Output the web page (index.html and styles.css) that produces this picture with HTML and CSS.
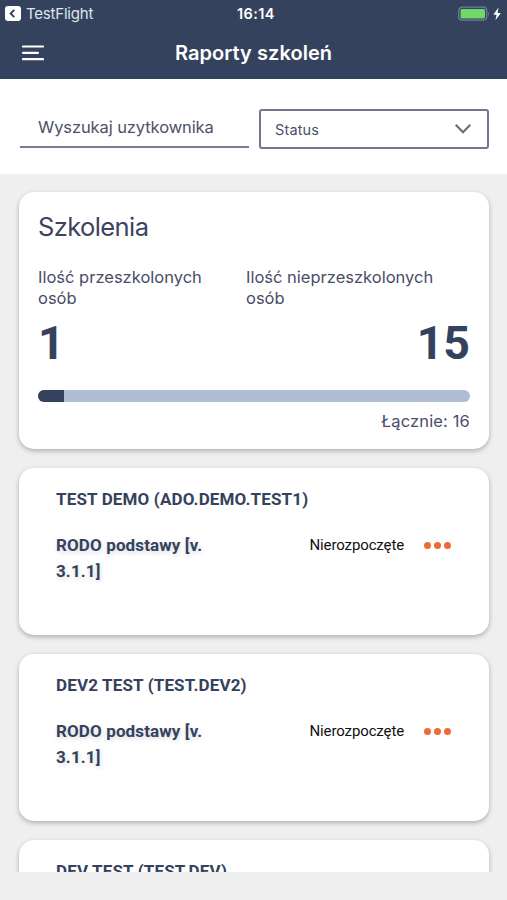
FILE: index.html
```html
<!DOCTYPE html>
<html lang="pl">
<head>
    <meta charset="UTF-8">
    <meta name="viewport" content="width=device-width, initial-scale=1.0">
    <title>Raporty szkoleń</title>
    <link rel="stylesheet" href="styles.css">
</head>
<body>
    <header class="header">
        <div class="status-bar">
            <div class="back">
                <svg width="16" height="15" viewBox="0 0 16 15">
                    <rect width="16" height="15" rx="3" fill="#fff"/>
                    <path d="M9.3 3.8L5.6 7.5L9.3 11.2" fill="none" stroke="#35425d" stroke-width="1.9"/>
                </svg>
                <span>TestFlight</span>
            </div>
            <div class="time">16:14</div>
            <div class="battery">
                <svg width="44" height="16" viewBox="0 0 44 16">
                    <rect x="0.7" y="1.2" width="28" height="13" rx="3.5" fill="none" stroke="#74809a" stroke-width="1.2"/>
                    <rect x="2.5" y="3" width="24.5" height="9.5" rx="1.5" fill="#6fd868"/>
                    <path d="M30.2 5.5Q32 7.7 30.2 10z" fill="#74809a"/>
                    <path d="M40.5 1.5L35.3 8.8H38.6L37.4 14.3L42.9 7H39.5z" fill="#fff"/>
                </svg>
            </div>
        </div>
        <div class="nav">
            <svg class="menu" width="22" height="16" viewBox="0 0 22 16">
                <path d="M1 1.5H21M1 7.8H16M1 14.2H21" stroke="#fff" stroke-width="2.2" stroke-linecap="round"/>
            </svg>
            <h1>Raporty szkoleń</h1>
        </div>
    </header>
    <div class="filters">
        <input class="search" type="text" placeholder="Wyszukaj uzytkownika">
        <div class="select">
            <span>Status</span>
            <svg width="16" height="10" viewBox="0 0 16 10">
                <path d="M0.7 0.8L8 8.2L15.3 0.8" fill="none" stroke="#6b6b70" stroke-width="2.1"/>
            </svg>
        </div>
    </div>
    <main class="list">
        <section class="card summary">
            <h2>Szkolenia</h2>
            <div class="stats">
                <div class="stat">
                    <p>Ilość przeszkolonych osób</p>
                    <strong>1</strong>
                </div>
                <div class="stat right">
                    <p>Ilość nieprzeszkolonych osób</p>
                    <strong>15</strong>
                </div>
            </div>
            <div class="progress"><div class="bar" style="width: 6.1%"></div></div>
            <div class="total">Łącznie: 16</div>
        </section>
        <section class="card user">
            <h3>TEST DEMO (ADO.DEMO.TEST1)</h3>
            <div class="training">
                <div class="course">RODO podstawy [v. 3.1.1]</div>
                <div class="state">Nierozpoczęte</div>
                <div class="dots"><i></i><i></i><i></i></div>
            </div>
        </section>
        <section class="card user">
            <h3>DEV2 TEST (TEST.DEV2)</h3>
            <div class="training">
                <div class="course">RODO podstawy [v. 3.1.1]</div>
                <div class="state">Nierozpoczęte</div>
                <div class="dots"><i></i><i></i><i></i></div>
            </div>
        </section>
        <section class="card user">
            <h3>DEV TEST (TEST.DEV)</h3>
        </section>
    </main>
</body>
</html>
```
FILE: styles.css
```css
* {
    box-sizing: border-box;
}
body {
    margin: 0;
    height: 900px;
    overflow: hidden;
    background-color: #efefef;
    color: #35425d;
    font-family: Inter, "Liberation Sans", sans-serif;
}
h1, h2, h3, p {
    margin: 0;
}
svg {
    display: block;
    flex: none;
}
.header {
    height: 79px;
    background-color: #35425d;
    color: #fff;
}
.status-bar {
    display: grid;
    grid-template-columns: 1fr auto 1fr;
    align-items: center;
    height: 27px;
    padding: 0 5px;
    font-size: 15px;
}
.back {
    display: flex;
    align-items: center;
    gap: 5px;
    color: #dfe4ee;
    letter-spacing: -0.2px;
}
.time {
    padding-left: 5px;
    font-weight: 600;
    font-size: 14.5px;
    letter-spacing: 0.4px;
}
.battery {
    justify-self: end;
}
.nav {
    display: grid;
    grid-template-columns: 1fr auto 1fr;
    align-items: center;
    height: 51px;
    padding: 0 22px;
}
.nav h1 {
    font-size: 20px;
    font-weight: 600;
    letter-spacing: 0.05px;
}
.filters {
    display: flex;
    gap: 10px;
    height: 95px;
    padding: 30px 18px 0 20px;
    background-color: #fff;
}
.search {
    width: 229px;
    height: 39px;
    padding: 0 18px 1px;
    border: 0;
    border-bottom: 2px solid #7d7a95;
    background: none;
    color: #4d5068;
    font-family: inherit;
    font-size: 16.5px;
    letter-spacing: -0.1px;
}
.search::placeholder {
    color: #4d5068;
    opacity: 1;
}
.select {
    display: flex;
    align-items: center;
    justify-content: space-between;
    width: 230px;
    height: 40px;
    padding: 0 16px 0 14px;
    border: 2px solid #74768d;
    border-radius: 3px;
    color: #4d5068;
    font-size: 14.5px;
    letter-spacing: 0.15px;
}
.list {
    height: 698px;
    padding: 18px 18px 0 19px;
    overflow: hidden;
}
.card {
    margin-bottom: 19px;
    border-radius: 15px;
    background-color: #fff;
    box-shadow: 0 2px 5px rgba(0, 0, 0, 0.27);
}
.summary {
    height: 257px;
    padding: 19px 19px 0;
}
.summary h2 {
    font-size: 25.5px;
    font-weight: 400;
    line-height: 32px;
    letter-spacing: -0.6px;
    color: #3d4360;
}
.stats {
    display: flex;
    margin-top: 24px;
}
.stat {
    width: 208px;
}
.right {
    width: 224px;
}
.stat p {
    padding-right: 20px;
    font-size: 16.5px;
    line-height: 21px;
    color: #4a4d66;
}
.stat strong {
    display: block;
    margin-top: 6px;
    font-family: Roboto, sans-serif;
    font-size: 46.5px;
    line-height: 56px;
}
.right strong {
    text-align: right;
}
.progress {
    height: 12px;
    margin-top: 19px;
    border-radius: 6px;
    background-color: #b0bcd4;
    overflow: hidden;
}
.bar {
    height: 12px;
    background-color: #35425d;
}
.total {
    margin-top: 9px;
    font-size: 16.5px;
    line-height: 21px;
    letter-spacing: 0.15px;
    text-align: right;
    color: #4a4d66;
}
.user {
    height: 167px;
    padding: 20px 37px 0;
    font-family: Roboto, sans-serif;
}
.user h3 {
    font-size: 17px;
    font-weight: 700;
    line-height: 22px;
    letter-spacing: 0.15px;
}
.training {
    display: flex;
    margin-top: 22px;
    line-height: 26px;
}
.course {
    width: 160px;
    font-size: 17px;
    font-weight: 700;
    letter-spacing: 0.12px;
    text-shadow: 1px 2px 5px rgba(53, 66, 93, 0.2);
}
.state {
    width: 114px;
    margin-left: 93.5px;
    font-size: 15px;
    letter-spacing: -0.12px;
    color: #111;
}
.dots {
    display: flex;
    gap: 3px;
    align-items: center;
    height: 26px;
}
.dots i {
    width: 7px;
    height: 7px;
    border-radius: 50%;
    background-color: #ee6b35;
}
```
